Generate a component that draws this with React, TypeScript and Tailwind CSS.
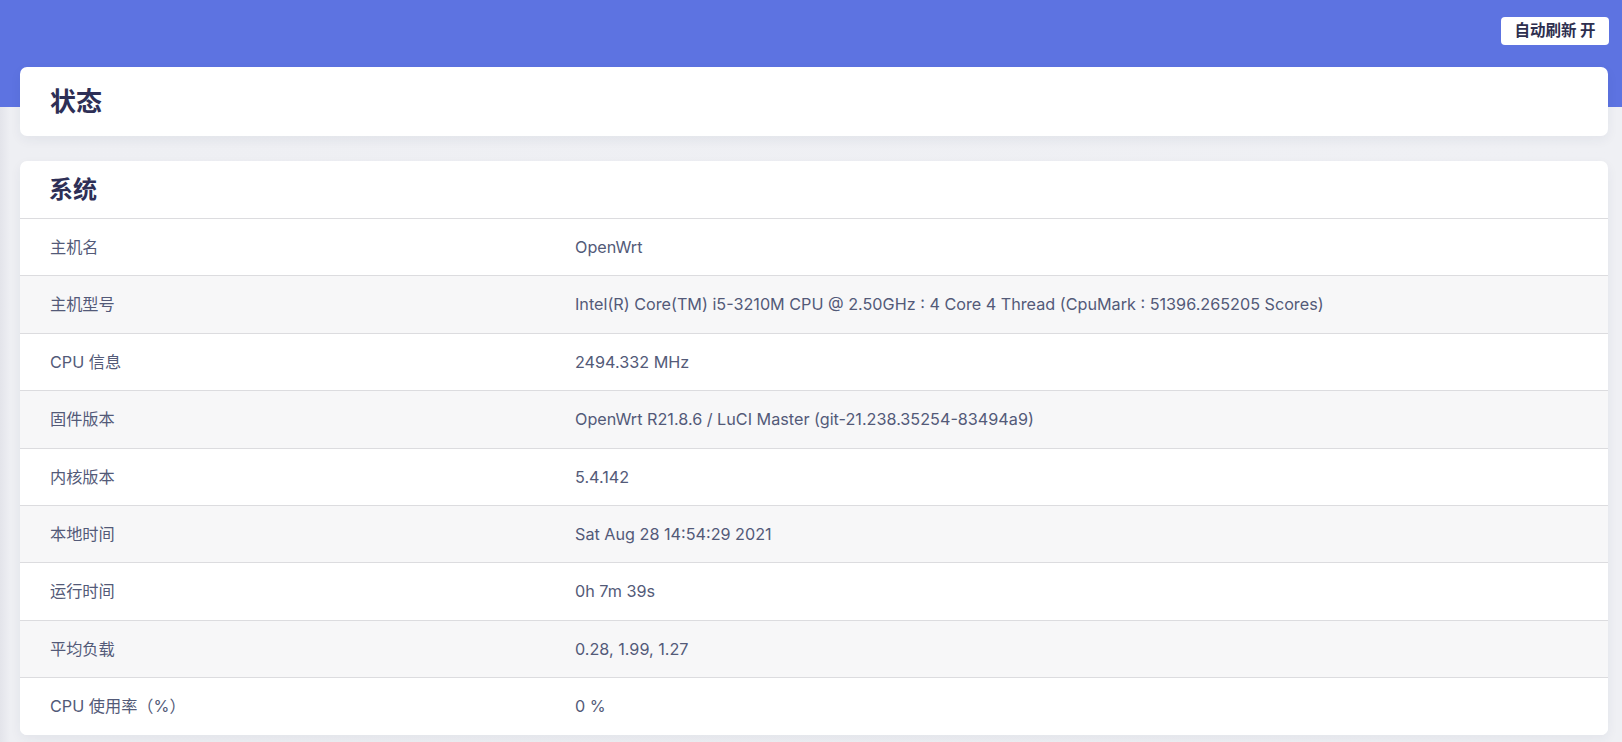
const rows: [string, string][] = [
  ["主机名", "OpenWrt"],
  ["主机型号", "Intel(R) Core(TM) i5-3210M CPU @ 2.50GHz : 4 Core 4 Thread (CpuMark : 51396.265205 Scores)"],
  ["CPU 信息", "2494.332 MHz"],
  ["固件版本", "OpenWrt R21.8.6 / LuCI Master (git-21.238.35254-83494a9)"],
  ["内核版本", "5.4.142"],
  ["本地时间", "Sat Aug 28 14:54:29 2021"],
  ["运行时间", "0h 7m 39s"],
  ["平均负载", "0.28, 1.99, 1.27"],
  ["CPU 使用率（%）", "0 %"],
];

const font = { fontFamily: "Inter, 'Noto Sans CJK SC', sans-serif" };

export default function App() {
  return (
    <div
      className="min-h-[742px] w-full bg-[linear-gradient(90deg,#e3e4ea_0px,#eeeff3_10px,#eff0f4_100%)]"
      style={font}
    >
      <header className="flex h-[107px] justify-end bg-[#5d73e1] pr-[13px] pt-[17px]">
        <button className="h-[28px] w-[108px] rounded-[4px] bg-white text-[15.5px] font-bold text-[#2e2f4f]">
          自动刷新 开
        </button>
      </header>

      <main className="-mt-[40px] ml-[20px] mr-[14px] flex flex-col gap-[25px]">
        <section className="flex h-[69px] items-center rounded-[7px] bg-white px-[30px] shadow-[0_4px_12px_rgba(40,45,80,0.06)]">
          <h1 className="text-[26px] font-bold text-[#2e2f56]">状态</h1>
        </section>

        <section className="overflow-hidden rounded-[7px] bg-white shadow-[0_4px_12px_rgba(40,45,80,0.06)]">
          <h2 className="flex h-[57px] items-center px-[29px] text-[24px] font-bold text-[#2e2f56]">系统</h2>
          {rows.map(([label, value], i) => (
            <div
              key={label}
              className={`flex h-[57.4px] items-center border-t border-[#dcdcdf] text-[16.2px] text-[#535a78] ${
                i % 2 === 1 ? "bg-[#f7f7f8]" : "bg-white"
              }`}
            >
              <div className="w-[555px] shrink-0 pl-[30px]">{label}</div>
              <div>{value}</div>
            </div>
          ))}
        </section>
      </main>
    </div>
  );
}
